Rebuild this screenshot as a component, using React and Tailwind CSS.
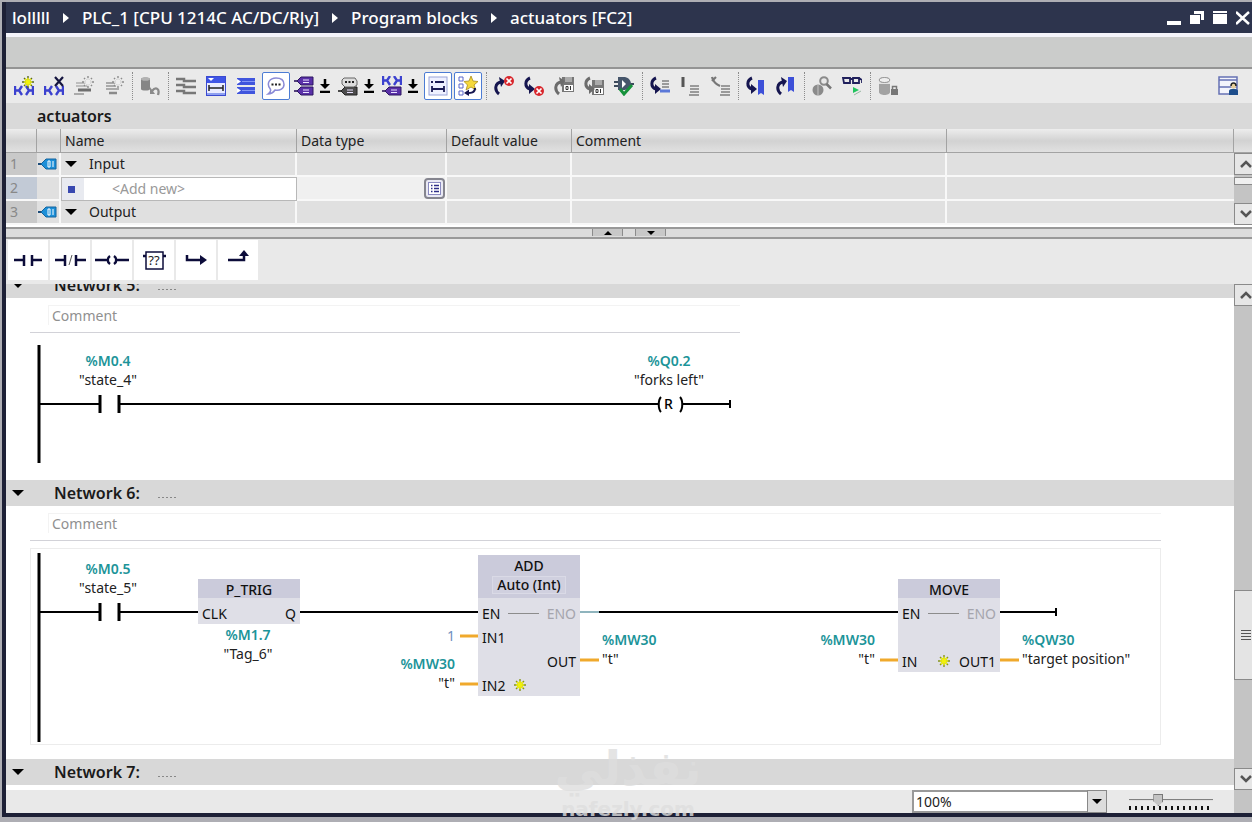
import { useState } from "react";

/* ---------- toolbar icons, all on a 20x20 grid ---------- */

const Svg = ({ children, size = 20 }) => (
    <svg width={size} height={size} viewBox="0 0 20 20" fill="none" aria-hidden="true" className="shrink-0">
        {children}
    </svg>
);

const Spark = ({ x, y, color = "#5b6b1c", core = "#f2f20a" }) => (
    <g transform={`translate(${x} ${y})`}>
        <path d="M0-6V6M-6 0H6M-4-4L4 4M-4 4L4-4" stroke={color} strokeWidth="1.400" />
        <path d="M0-4V4M-4 0H4M-3-3L3 3M-3 3L3-3" stroke={core} strokeWidth="1.600" />
    </g>
);

const Rungs = ({ y = 9, x = 0 }) => (
    <path
        transform={`translate(${x} ${y})`}
        d="M1 1V10M1 5.500H5M8 1L5 5.500L8 10M12 1L15 5.500L12 10M19 1V10M15 5.500H19"
        stroke="#3c42cf"
        strokeWidth="2.400"
    />
);

const TagShape = ({ y, fill = "#5a30a8", dark = "#2c1660" }) => (
    <g transform={`translate(0 ${y})`}>
        <path d="M0 4H4" stroke={dark} strokeWidth="1.600" />
        <path d="M3 4L7 0H19V8H7Z" fill={fill} stroke={dark} strokeWidth="1" />
        <path d="M9 3H15M9 5.500H15" stroke="#e9e2ff" strokeWidth="1" />
    </g>
);

const Lines = ({ x, y, w = 9, color = "#9a9a9a" }) => (
    <path d={`M${x} ${y}h${w}M${x} ${y + 3}h${w}M${x} ${y + 6}h${w}`} stroke={color} strokeWidth="2" />
);

const CurveUp = ({ color = "#15154f" }) => (
    <g>
        <path d="M5 18C0 14 1 7 7 6" stroke={color} strokeWidth="3" />
        <path d="M5 1L11 5L7 11Z" fill={color} />
    </g>
);

const CurveDown = ({ color = "#15154f" }) => (
    <g>
        <path d="M6 2C1 4 0 11 6 13" stroke={color} strokeWidth="3" />
        <path d="M5 8L11 13L5 18Z" fill={color} />
    </g>
);

const RedCross = ({ x, y }) => (
    <g transform={`translate(${x} ${y})`}>
        <circle r="5" fill="#d8262c" />
        <path d="M-2.500-2.500L2.500 2.500M-2.500 2.500L2.500-2.500" stroke="#fff" strokeWidth="1.700" />
    </g>
);

const Floppy = ({ x, y }) => (
    <g transform={`translate(${x} ${y})`}>
        <rect width="12" height="15" fill="#777" />
        <path d="M3 0H10V5H3Z" fill="#aaa" />
        <path d="M2 8H11V14H2Z" fill="#fff" />
        <path d="M4 9.500H6V12.500H4ZM8.500 9V13" stroke="#333" />
    </g>
);

const Bubble = ({ fill = "#fff", stroke = "#8a8ad6" }) => (
    <g>
        <path d="M10 2C15 2 18 4.500 18 8.500S14 15 9 14C7 17 5 18 2 18C5 16 5 14 4 12.500C0 7 4 2 10 2Z" fill={fill} stroke={stroke} strokeWidth="1.500" />
        <path d="M5.500 8.500h2M9 8.500h2M12.500 8.500h2" stroke="#222" strokeWidth="2" />
    </g>
);

const icons = {
    insertNetwork: <><Rungs /><Spark x={14} y={6} /></>,
    deleteNetwork: <><Rungs /><path d="M11 1L19 10M19 1L11 10" stroke="#15153f" strokeWidth="2.200" /></>,
    insertRow: <><path d="M2 7H11M2 10H14" stroke="#bdbdbd" strokeWidth="2" /><path d="M4 14H17" stroke="#6e6e6e" strokeWidth="3" /><path d="M0 18H10" stroke="#aaa" strokeWidth="2" /><Spark x={14} y={6} color="#8c8c8c" core="#eee" /></>,
    addRow: <><path d="M2 7H11M2 10H12M2 13H15" stroke="#aaa" strokeWidth="2" /><path d="M5 17H13" stroke="#8a8a8a" strokeWidth="2.500" /><Spark x={14} y={6} color="#8c8c8c" core="#eee" /></>,
    resetValues: <><path d="M1 3C1 1 10 1 10 3V13C10 15 1 15 1 13Z" fill="#868686" /><ellipse cx="5.500" cy="3" rx="4.500" ry="1.800" fill="#b2b2b2" /><path d="M12 15C16 10 20 13 18 19" stroke="#8a8a8a" strokeWidth="2.300" /><path d="M10 11V18H15Z" fill="#8a8a8a" /></>,
    networksOpen: <path d="M0 3H8V5H20M0 9H8V11H20M0 15H8V17H20" stroke="#777" strokeWidth="2.500" />,
    networksFrame: <><rect x="0.500" y="0.500" width="19" height="19" fill="#e9ebff" stroke="#3a4ad0" /><rect x="1" y="1" width="18" height="6" fill="#3f55e6" /><path d="M2 2H8L5 5Z" fill="#fff" /><path d="M3 12H17M3 9V15M17 9V15" stroke="#222" strokeWidth="1.500" /><path d="M1 18H19" stroke="#8fa0f0" strokeWidth="2" /></>,
    networksClosed: <><rect x="1" y="2" width="18" height="7" fill="#4055dd" /><rect x="1" y="11" width="18" height="7" fill="#4055dd" /><path d="M1 3L5 5.500L1 8ZM1 12L5 14.500L1 17Z" fill="#fff" /><path d="M6 5.500H19M6 14.500H19" stroke="#8496f5" /></>,
    comments: <Bubble />,
    operands: <><TagShape y={1} /><TagShape y={11} /></>,
    tagInfo: <><TagShape y={11} fill="#4c4c4c" dark="#222" /><path d="M6 2H17L19 5V9L16 11H7L4 8V4Z" fill="#ddd" stroke="#666" /><path d="M7 6h2M10.500 6h2M14 6h2" stroke="#222" strokeWidth="2" /></>,
    symbols: <><Rungs y={-1} /><TagShape y={11} /></>,
    freeComments: <><rect x="1" y="1" width="18" height="18" fill="#eef0ff" stroke="#9aa4d8" /><path d="M3 6H5M7 6H16M4 13H16M4 10V16M16 10V16" stroke="#1a1a55" strokeWidth="1.800" /></>,
    favorites: <><path d="M1 1H5V5H1ZM1 8H5V12H1ZM1 15H5V19H1Z" stroke="#5a66c8" /><path d="M13 0L15 5L20 5.500L16 9L18 14L13 11L8 14L9.500 9L6 5.500L11 5Z" fill="#f5d83b" stroke="#a78b1b" strokeWidth="0.800" /><path d="M17 12C17 17 13 17 9 17" stroke="#15154f" strokeWidth="2" /><path d="M6 17L11 13.500V20Z" fill="#15154f" /></>,
    prevError: <><CurveUp /><RedCross x={15} y={5} /></>,
    nextError: <><CurveDown /><RedCross x={15} y={15} /></>,
    prevChange: <><Floppy x={8} y={1} /><CurveUp color="#6c6c6c" /></>,
    nextChange: <><Floppy x={8} y={4} /><CurveDown color="#6c6c6c" /></>,
    consistency: <><path d="M0 6H4M0 10H4M16 8H20" stroke="#3c4a5c" strokeWidth="2" /><path d="M4 1H11C15 2 17 5 17 8S15 13 11 14H4Z" fill="#46566b" /><path d="M8 4L12 8L8 12Z" fill="#fff" /><path d="M6 13L10 18L18 9" stroke="#16923b" strokeWidth="3" /></>,
    goTo: <><CurveDown /><path d="M12 5H19M12 8H19M12 11H19" stroke="#9a9a9a" strokeWidth="2" /><path d="M10 15H20" stroke="#5b78d8" strokeWidth="3" /></>,
    absolute: <><path d="M3 1V11" stroke="#555" strokeWidth="3" /><Lines x={10} y={10} /><path d="M9 19H19" stroke="#999" strokeWidth="2" /></>,
    absoluteOff: <><path d="M2 1C3 5 5 8 10 10M6 1L2 5" stroke="#777" strokeWidth="2.200" /><Lines x={11} y={10} /><path d="M10 19H20" stroke="#999" strokeWidth="2" /></>,
    nextBookmark: <><CurveDown /><path d="M12 4H18V19L15 17L12 19Z" fill="#3d50d8" /></>,
    prevBookmark: <><CurveUp /><path d="M12 1H18V16L15 14L12 16Z" fill="#3d50d8" /></>,
    search: <><circle cx="6" cy="14" r="5.500" fill="#8b8b8b" /><path d="M6 8.500V19.500" stroke="#c4c4c4" /><circle cx="12" cy="5" r="3.800" fill="#e8e8e8" stroke="#8b8b8b" strokeWidth="2" /><path d="M14.500 8L19 12.500" stroke="#777" strokeWidth="2.500" /></>,
    monitor: <><path d="M1 2H8V7H2ZM11 2H17V7H11ZM8 3H11M17 2L20 4V7" stroke="#20205c" strokeWidth="1.800" /><path d="M11 11L17 14L11 17Z" fill="#21c45e" /><path d="M12 19L19 15" stroke="#9ab8a4" /></>,
    database: <><path d="M1 4C1 0 12 0 12 4V16C12 20 1 20 1 16Z" fill="#a2a2a2" /><path d="M1 4C1 8 12 8 12 4V8H1Z" fill="#e2e2e2" /><ellipse cx="6.500" cy="4" rx="5.300" ry="2.500" fill="#eee" stroke="#999" /><rect x="13" y="13" width="7" height="6" fill="#777" /><path d="M14.500 13V10.500H18.500V13" stroke="#777" strokeWidth="1.500" /></>,
    layout: <><path d="M1 1H19V18H1ZM1 4H19M1 11H19" fill="#f4f5fc" stroke="#6571b4" strokeWidth="1.500" /><path d="M11 19V15C11 12 20 12 20 15V19Z" fill="#1e4e8c" /><circle cx="15.500" cy="10" r="2.500" fill="#e8cf9a" /><path d="M13 10C13 6 18 6 18 10" stroke="#222" strokeWidth="1.500" /></>,
};

const toolbar = [
    { icon: "insertNetwork", label: "Insert network" },
    { icon: "deleteNetwork", label: "Delete network" },
    { icon: "insertRow", label: "Insert row" },
    { icon: "addRow", label: "Add row" },
    null,
    { icon: "resetValues", label: "Reset start values" },
    null,
    { icon: "networksOpen", label: "Open all networks" },
    { icon: "networksFrame", label: "Show networks" },
    { icon: "networksClosed", label: "Close all networks" },
    { icon: "comments", label: "Network comments", active: true },
    { icon: "operands", label: "Operands", menu: true },
    { icon: "tagInfo", label: "Tag information", menu: true },
    { icon: "symbols", label: "Symbol display", menu: true },
    { icon: "freeComments", label: "Free comments", active: true },
    { icon: "favorites", label: "Favorites", active: true },
    null,
    { icon: "prevError", label: "Previous error" },
    { icon: "nextError", label: "Next error" },
    { icon: "prevChange", label: "Previous change" },
    { icon: "nextChange", label: "Next change" },
    { icon: "consistency", label: "Consistency check" },
    null,
    { icon: "goTo", label: "Go to line" },
    { icon: "absolute", label: "Absolute operands" },
    { icon: "absoluteOff", label: "Symbolic operands" },
    null,
    { icon: "nextBookmark", label: "Next bookmark" },
    { icon: "prevBookmark", label: "Previous bookmark" },
    null,
    { icon: "search", label: "Find" },
    { icon: "monitor", label: "Monitoring on/off" },
    null,
    { icon: "database", label: "Know-how protection" },
];

const favorites = [
    { label: "Normally open contact", art: <path d="M0 14H10M10 9V20M18 9V20M18 14H28" /> },
    { label: "Normally closed contact", art: <><path d="M-1 14H9M9 9V20M20 9V20M20 14H30" /><path d="M16 9L13 19" strokeWidth="1" stroke="#555" /></> },
    { label: "Assignment", art: <path d="M-3 14H10M18 14H31M12 10C9 12 9 16 12 18M16 10C19 12 19 16 16 18" /> },
    { label: "Empty box", art: <><rect x="6" y="6" width="17" height="17" strokeWidth="1.500" /><path d="M3 10H6M23 10H26" /></>, text: "??" },
    { label: "Open branch", art: <><path d="M5 9V14H20" /><path d="M18 9L25 14L18 19Z" fill="#0c0c3a" stroke="none" /></> },
    { label: "Close branch", art: <><path d="M4 14H20V8" /><path d="M15 10L20 4L25 10Z" fill="#0c0c3a" stroke="none" /></> },
];

function TitleBar() {
    const path = ["lolllll", "PLC_1 [CPU 1214C AC/DC/Rly]", "Program blocks", "actuators [FC2]"];

    return (
        <header className="flex h-[31px] shrink-0 items-center justify-between bg-[#2d344d] pl-1.5 text-white">
            <nav aria-label="Path" className="flex items-center gap-[13px] text-[17px] font-medium whitespace-nowrap">
                {path.map((part, i) => (
                    <span key={part} className="flex items-center gap-[13px]">
                        {i > 0 && (
                            <svg width="6" height="10" viewBox="0 0 6 10" aria-hidden="true">
                                <path d="M0 0L6 5L0 10Z" fill="#fff" />
                            </svg>
                        )}
                        {part}
                    </span>
                ))}
            </nav>
            <div className="flex gap-2">
                <button aria-label="Minimize"><svg width="15" height="16"><path d="M0 11H14V15H0Z" fill="#fff" /></svg></button>
                <button aria-label="Restore"><svg width="15" height="16"><path d="M4 1H14V10H11V4H4ZM0 5H10V14H0Z" fill="#fff" /></svg></button>
                <button aria-label="Maximize"><svg width="15" height="16"><path d="M0 1H14V3H0ZM0 4H14V14H0Z" fill="#fff" /></svg></button>
                <button aria-label="Close"><svg width="16" height="16"><path d="M0 2L13 14M13 2L0 14" stroke="#fff" strokeWidth="2.500" /></svg></button>
            </div>
        </header>
    );
}

function ToolButton({ item }) {
    if (item.menu) {
        return (
            <span className="flex">
                <button aria-label={item.label} className="flex h-7 w-6 items-center justify-center">
                    <Svg>{icons[item.icon]}</Svg>
                </button>
                <button aria-label={`${item.label} menu`} className="flex h-7 w-[18px] items-center justify-center">
                    <svg width="10" height="14" viewBox="0 0 10 14">
                        <path d="M5 0V6M0 13H10" stroke="#000" strokeWidth="2.500" />
                        <path d="M0 5H10L5 10Z" fill="#000" />
                    </svg>
                </button>
            </span>
        );
    }

    return (
        <button
            aria-label={item.label}
            className={
                item.active
                    ? "flex size-7 items-center justify-center rounded-xs border border-[#4c7cd4] bg-white"
                    : "flex size-7 items-center justify-center"
            }
        >
            <Svg>{icons[item.icon]}</Svg>
        </button>
    );
}

function Toolbar() {
    return (
        <div role="toolbar" className="flex h-[34px] shrink-0 items-center gap-0.5 bg-[#eaeaea] pr-2.5 pl-1">
            {toolbar.map((item, i) =>
                item ? (
                    <ToolButton key={item.icon} item={item} />
                ) : (
                    <span key={i} className="flex w-1 justify-center">
                        <span className="h-7 border-l border-dotted border-[#8c8c8c]" />
                    </span>
                )
            )}
            <button aria-label="Layout" className="ml-auto flex size-7 items-center justify-center">
                <Svg>{icons.layout}</Svg>
            </button>
        </div>
    );
}

function ScrollButton({ down }) {
    return (
        <button
            aria-label={down ? "Scroll down" : "Scroll up"}
            className="flex h-[22px] w-full shrink-0 items-center justify-center border border-r-0 border-[#8a8a8a] bg-[#e6e6e6] pl-1"
        >
            <svg width="12" height="8" viewBox="0 0 12 8" fill="none">
                <path d={down ? "M1 1L6 6L11 1" : "M1 7L6 2L11 7"} stroke="#555" strokeWidth="2.500" />
            </svg>
        </button>
    );
}

function RowTag() {
    return (
        <svg width="19" height="12" viewBox="0 0 19 12" aria-hidden="true" className="ml-px">
            <path d="M0 6H5" stroke="#1c4b78" strokeWidth="2" />
            <path d="M3 6L8 1H18V11H8Z" fill="#1c8fd8" stroke="#14649e" />
            <path d="M10 3H12V9H10ZM15 3V9" stroke="#fff" strokeWidth="1" fill="none" />
        </svg>
    );
}

const Triangle = () => (
    <svg width="12" height="7" viewBox="0 0 12 7" aria-hidden="true">
        <path d="M0 0H12L6 6Z" fill="#000" />
    </svg>
);

function InterfaceTable() {
    const head = "border-r border-b border-[#a3a3a3] px-1 text-left font-normal";
    const cell = "border-r-2 border-b-2 border-[#f8f8f8] bg-[#e0e0e0]";
    const rows = [
        { no: 1, name: "Input" },
        { no: 2, add: true },
        { no: 3, name: "Output" },
    ];

    return (
        <div className="flex shrink-0 pb-0.5">
            <table className="w-full flex-1 table-fixed border-separate border-spacing-0 text-sm leading-5 text-[#222]">
                <colgroup>
                    <col className="w-[31px]" />
                    <col className="w-6" />
                    <col className="w-[236px]" />
                    <col className="w-[150px]" />
                    <col className="w-[125px]" />
                    <col className="w-[375px]" />
                    <col />
                </colgroup>
                <thead>
                    <tr className="h-6 bg-linear-to-b from-[#ededed] via-[#d2d2d2] to-[#e2e2e2]">
                        <th className={head} aria-label="Row" />
                        <th className={head} aria-label="Kind" />
                        <th className={head}>Name</th>
                        <th className={head}>Data type</th>
                        <th className={head}>Default value</th>
                        <th className={head}>Comment</th>
                        <th className={head} aria-label="Empty" />
                    </tr>
                </thead>
                <tbody>
                    {rows.map((row) => (
                        <tr key={row.no} className="h-6">
                            <td className={`border-b-2 border-[#f8f8f8] pl-1 text-[#888] ${row.add ? "bg-[#c2cad6]" : "bg-[#c9c9c9]"}`}>
                                {row.no}
                            </td>
                            <td className={cell}>{row.name && <RowTag />}</td>
                            {row.add ? (
                                <td className="border border-[#b8b8b8] bg-white p-0">
                                    <div className="flex items-center">
                                        <span className="flex h-[22px] w-[22px] items-center bg-[#e8eaf0] pl-1.5">
                                            <span className="size-[7px] bg-[#3848b0]" />
                                        </span>
                                        <span className="pl-7 text-[#999]">&lt;Add new&gt;</span>
                                    </div>
                                </td>
                            ) : (
                                <td className={`${cell} p-0`}>
                                    <button className="flex items-center gap-3 pl-1">
                                        <Triangle />
                                        {row.name}
                                    </button>
                                </td>
                            )}
                            <td className={row.add ? "border-r-2 border-b-2 border-[#f8f8f8] bg-[#f0f0f0] p-0" : cell}>
                                {row.add && (
                                    <button
                                        aria-label="Choose data type"
                                        className="ml-auto flex size-[21px] items-center justify-center rounded-sm border-2 border-[#85858f] bg-[#e9e9f4]"
                                    >
                                        <svg width="13" height="13" viewBox="0 0 13 13">
                                            <rect x="0.500" y="0.500" width="12" height="12" fill="#fff" stroke="#8a8ac0" />
                                            <path d="M3 3.500H4.500M6 3.500H11M3 6.500H4.500M6 6.500H11M3 9.500H4.500M6 9.500H11" stroke="#2d2d88" strokeWidth="1.500" />
                                        </svg>
                                    </button>
                                )}
                            </td>
                            <td className={cell} />
                            <td className={cell} />
                            <td className="border-b-2 border-[#f8f8f8] bg-[#e0e0e0]" />
                        </tr>
                    ))}
                </tbody>
            </table>
            <div className="flex w-[18px] flex-col bg-[#c4c4c4]">
                <div className="h-6 shrink-0 border-b border-[#a3a3a3] bg-linear-to-b from-[#ededed] via-[#d2d2d2] to-[#e2e2e2]" />
                <ScrollButton />
                <div className="mt-0.5 mb-auto h-2 border border-r-0 border-[#8a8a8a] bg-[#f0f0f0]" />
                <ScrollButton down />
            </div>
        </div>
    );
}

function Splitter() {
    return (
        <div className="flex h-3 shrink-0 items-start justify-center gap-3 border-t-2 border-b-2 border-[#999] bg-[#dcdcdc]">
            {["Collapse", "Expand"].map((label, i) => (
                <button
                    key={label}
                    aria-label={label}
                    className="flex h-[7px] w-[31px] items-center justify-center border-x border-[#8c8c8c] bg-[#c8c8c8]"
                >
                    <svg width="8" height="4" viewBox="0 0 8 4">
                        <path d={i ? "M0 0H8L4 4Z" : "M0 4H8L4 0Z"} fill="#000" />
                    </svg>
                </button>
            ))}
        </div>
    );
}

function FavoritesBar() {
    return (
        <div className="flex h-[45px] shrink-0 items-start gap-0.5 bg-[#e9e9e9] px-0.5 pt-px">
            {favorites.map((fav) => (
                <button key={fav.label} aria-label={fav.label} className="flex h-10 w-10 items-center justify-center bg-white">
                    <svg width="28" height="28" viewBox="0 0 28 28" fill="none" stroke="#0c0c3a" strokeWidth="2.500" className="overflow-visible">
                        {fav.art}
                        {fav.text && (
                            <text x="14" y="19" textAnchor="middle" fontSize="13" fill="#222" stroke="none">
                                {fav.text}
                            </text>
                        )}
                    </svg>
                </button>
            ))}
        </div>
    );
}

/* ---------- ladder networks ---------- */

const alignments = { left: "text-left", center: "text-center", right: "text-right" };

function Operand({ x, y, address, name, align = "center" }) {
    const left = align === "center" ? x - 75 : align === "right" ? x - 150 : x;

    return (
        <div
            className={`absolute w-[150px] text-sm leading-[19px] text-[#222] ${alignments[align]}`}
            style={{ left, top: y }}
        >
            {address && <div className="font-semibold text-[#1c9499]">{address}</div>}
            <div>{name}</div>
        </div>
    );
}

function Block({ x, y, title, type, rows }) {
    return (
        <div className="absolute w-[102px] bg-[#dfdfe7] pb-0.5 text-sm leading-[16px] text-[#111]" style={{ left: x, top: y }}>
            <div className="flex flex-col items-center bg-[#cbcbdb] pt-[3px] font-medium">
                <span>{title}</span>
                {type && <span className="mt-0.5 mb-1 border border-[#dadae6] bg-[#d0d0df] px-1">{type}</span>}
            </div>
            {rows.map((row, i) => (
                <div key={i} className="flex h-6 items-end px-1">
                    <span>{row.in}</span>
                    {row.link && <span className="mx-2 mb-2 flex-1 border-b border-[#8c8c8c]" />}
                    {row.star && (
                        <svg width="14" height="14" viewBox="0 0 14 14" className={row.out ? "mb-0.5 ml-auto" : "mb-0.5 ml-2"}>
                            <Spark x={7} y={7} color="#87951a" />
                        </svg>
                    )}
                    <span className={row.link ? "text-[#a5a5ad]" : row.star ? "ml-2" : "ml-auto"}>{row.out}</span>
                </div>
            ))}
        </div>
    );
}

function Network({ title, children }) {
    return (
        <section>
            <h2 className="flex h-[26px] items-center bg-[#d8d8d8] pl-1.5 text-base font-semibold text-[#1a1a1a]">
                <button aria-label={`Toggle ${title}`}>
                    <Triangle />
                </button>
                <span className="w-[134px] pl-[30px] whitespace-nowrap">{title}:</span>
                <span className="flex w-[18px] justify-between pt-2">
                    {[0, 1, 2, 3, 4].map((d) => <span key={d} className="h-px w-0.5 bg-[#888]" />)}
                </span>
            </h2>
            {children}
        </section>
    );
}

function NetworkComment({ className }) {
    return (
        <div className={`ml-6 h-[35px] border-b border-[#d2d2d8] pt-[7px] pl-[18px] ${className}`}>
            <input
                aria-label="Network comment"
                placeholder="Comment"
                className="block h-5 w-full border-t border-l border-[#f3f3f3] pl-[3px] text-sm placeholder:text-[#909090]"
            />
        </div>
    );
}

const Contact = () => (
    <>
        <path d="M10 64H70" stroke="#000" strokeWidth="2" />
        <path d="M70 55V73M89 55V73" stroke="#000" strokeWidth="3" />
    </>
);

function Network5() {
    return (
        <Network title="Network 5">
            <NetworkComment className="w-[710px]" />
            <div className="relative mt-[7px] mb-3.5 ml-6 h-[126px] w-[710px]">
                <svg width="100%" height="100%" fill="none" className="absolute inset-0">
                    <path d="M9 5V123" stroke="#000" strokeWidth="3" />
                    <Contact />
                    <path d="M89 64H628M653 64H700M700 60V68" stroke="#000" strokeWidth="2" />
                    <path d="M631 57C628 60 628 69 631 72M650 57C653 60 653 69 650 72" stroke="#000" strokeWidth="2" />
                </svg>
                <Operand x={78} y={11} address="%M0.4" name={'"state_4"'} />
                <Operand x={639} y={11} address="%Q0.2" name={'"forks left"'} />
                <span className="absolute top-[54px] left-[634px] text-sm leading-[19px] font-medium">R</span>
            </div>
        </Network>
    );
}

function Network6() {
    return (
        <Network title="Network 6">
            <NetworkComment className="w-[1131px]" />
            <div className="relative mt-[7px] mb-3.5 ml-6 h-[197px] w-[1131px] shadow-[inset_0_0_0_1px_#ececec]">
                <svg width="100%" height="100%" fill="none" className="absolute inset-0">
                    <path d="M9 5V194" stroke="#000" strokeWidth="3" />
                    <Contact />
                    <path d="M89 64H168M270 64H448M569 64H868M970 64H1026M1026 60V68" stroke="#000" strokeWidth="2" />
                    <path d="M550 64H569" stroke="#8fb4bd" strokeWidth="2" />
                    <path d="M430 88H448M430 136H448M550 112H569M850 112H868M970 112H989" stroke="#f0a92c" strokeWidth="3" />
                </svg>
                <Operand x={78} y={11} address="%M0.5" name={'"state_5"'} />
                <Block x={168} y={31} title="P_TRIG" rows={[{ in: "CLK", out: "Q" }]} />
                <Operand x={218} y={77} address="%M1.7" name={'"Tag_6"'} />
                <Block
                    x={448}
                    y={7}
                    title="ADD"
                    type="Auto (Int)"
                    rows={[
                        { in: "EN", out: "ENO", link: true },
                        { in: "IN1" },
                        { out: "OUT" },
                        { in: "IN2", star: true },
                    ]}
                />
                <Operand x={425} y={78} align="right" name={<span className="text-[#6f8fc0]">1</span>} />
                <Operand x={425} y={106} align="right" address="%MW30" name={'"t"'} />
                <Operand x={572} y={82} align="left" address="%MW30" name={'"t"'} />
                <Operand x={845} y={82} align="right" address="%MW30" name={'"t"'} />
                <Block
                    x={868}
                    y={31}
                    title="MOVE"
                    rows={[{ in: "EN", out: "ENO", link: true }, {}, { in: "IN", out: "OUT1", star: true }]}
                />
                <Operand x={992} y={82} align="left" address="%QW30" name={'"target position"'} />
            </div>
        </Network>
    );
}

function Footer() {
    const [zoom, setZoom] = useState("100%");
    const [level, setLevel] = useState(33);

    return (
        <footer className="flex h-[23px] shrink-0 items-stretch justify-end gap-[22px] bg-[#e9e9e9] pr-[21px]">
            <div className="relative flex w-[195px]">
                <select
                    aria-label="Zoom"
                    value={zoom}
                    onChange={(e) => setZoom(e.target.value)}
                    className="w-full appearance-none border-2 border-[#999] bg-white pl-0.5 text-sm leading-4 text-[#222]"
                >
                    <option>50%</option>
                    <option>100%</option>
                    <option>200%</option>
                </select>
                <span className="pointer-events-none absolute inset-y-0 right-0 flex w-5 items-center justify-center border border-[#888] bg-[#dcdcdc]">
                    <svg width="10" height="5"><path d="M0 0H10L5 5Z" fill="#000" /></svg>
                </span>
            </div>
            <div className="w-[84px] pt-1">
                <input
                    type="range"
                    aria-label="Zoom level"
                    value={level}
                    onChange={(e) => setLevel(Number(e.target.value))}
                    className="block h-3 w-full appearance-none bg-linear-to-b from-transparent from-45% via-[#777] via-45% to-transparent to-55% [&::-webkit-slider-thumb]:h-3 [&::-webkit-slider-thumb]:w-2.5 [&::-webkit-slider-thumb]:appearance-none [&::-webkit-slider-thumb]:border [&::-webkit-slider-thumb]:border-[#777] [&::-webkit-slider-thumb]:bg-[#c4c4c4] [&::-webkit-slider-thumb]:[clip-path:polygon(0_0,100%_0,100%_60%,50%_100%,0_60%)]"
                />
                <svg width="84" height="5" className="block">
                    <path d="M0 2H84" stroke="#111" strokeWidth="4" strokeDasharray="2 4" />
                </svg>
            </div>
        </footer>
    );
}

function Watermark() {
    return (
        <div className="pointer-events-none absolute bottom-0 left-[548px] w-[160px] text-center font-['DejaVu_Sans'] font-bold text-[#dedede] opacity-80">
            <div dir="rtl" lang="ar" className="text-5xl leading-[56px]">نفذلي</div>
            <div className="text-xl leading-[26px]">nafezly.com</div>
        </div>
    );
}

export default function App() {
    return (
        <div className="relative flex h-screen flex-col overflow-hidden bg-[#aeaeb4] pt-0.5 pl-0.5 font-['Noto_Sans',sans-serif]">
            <div className="flex min-h-0 flex-1 flex-col border-b-4 border-l-4 border-[#1d2036] bg-white">
                <TitleBar />
                <div className="h-1 shrink-0 bg-[#f4f4fa]" />
                <div className="h-8 shrink-0 border-b-2 border-[#949494] bg-[#cbcccb]" />
                <Toolbar />
                <h1 className="flex h-[26px] shrink-0 items-center bg-[#d9d9d9] pl-[31px] text-base font-semibold text-[#1a1a1a]">actuators</h1>
                <InterfaceTable />
                <Splitter />
                <FavoritesBar />
                <div className="flex min-h-0 flex-1">
                    <main className="flex min-w-0 flex-1 flex-col">
                        <div className="min-h-0 flex-1 overflow-hidden">
                            <div className="-mt-3">
                                <Network5 />
                                <Network6 />
                                <Network title="Network 7" />
                            </div>
                        </div>
                        <Footer />
                    </main>
                    <div className="flex w-[18px] shrink-0 flex-col bg-[#c4c4c4] pb-[23px]">
                        <ScrollButton />
                        <div className="mt-[284px] mb-auto flex h-[90px] flex-col items-center justify-center gap-0.5 border border-r-0 border-[#8a8a8a] bg-[#e4e4e4] pl-1">
                            {[0, 1, 2, 3].map((n) => <span key={n} className="h-px w-2.5 bg-[#555]" />)}
                        </div>
                        <ScrollButton down />
                    </div>
                </div>
            </div>
            <div className="h-[5px] shrink-0" />
            <Watermark />
        </div>
    );
}
